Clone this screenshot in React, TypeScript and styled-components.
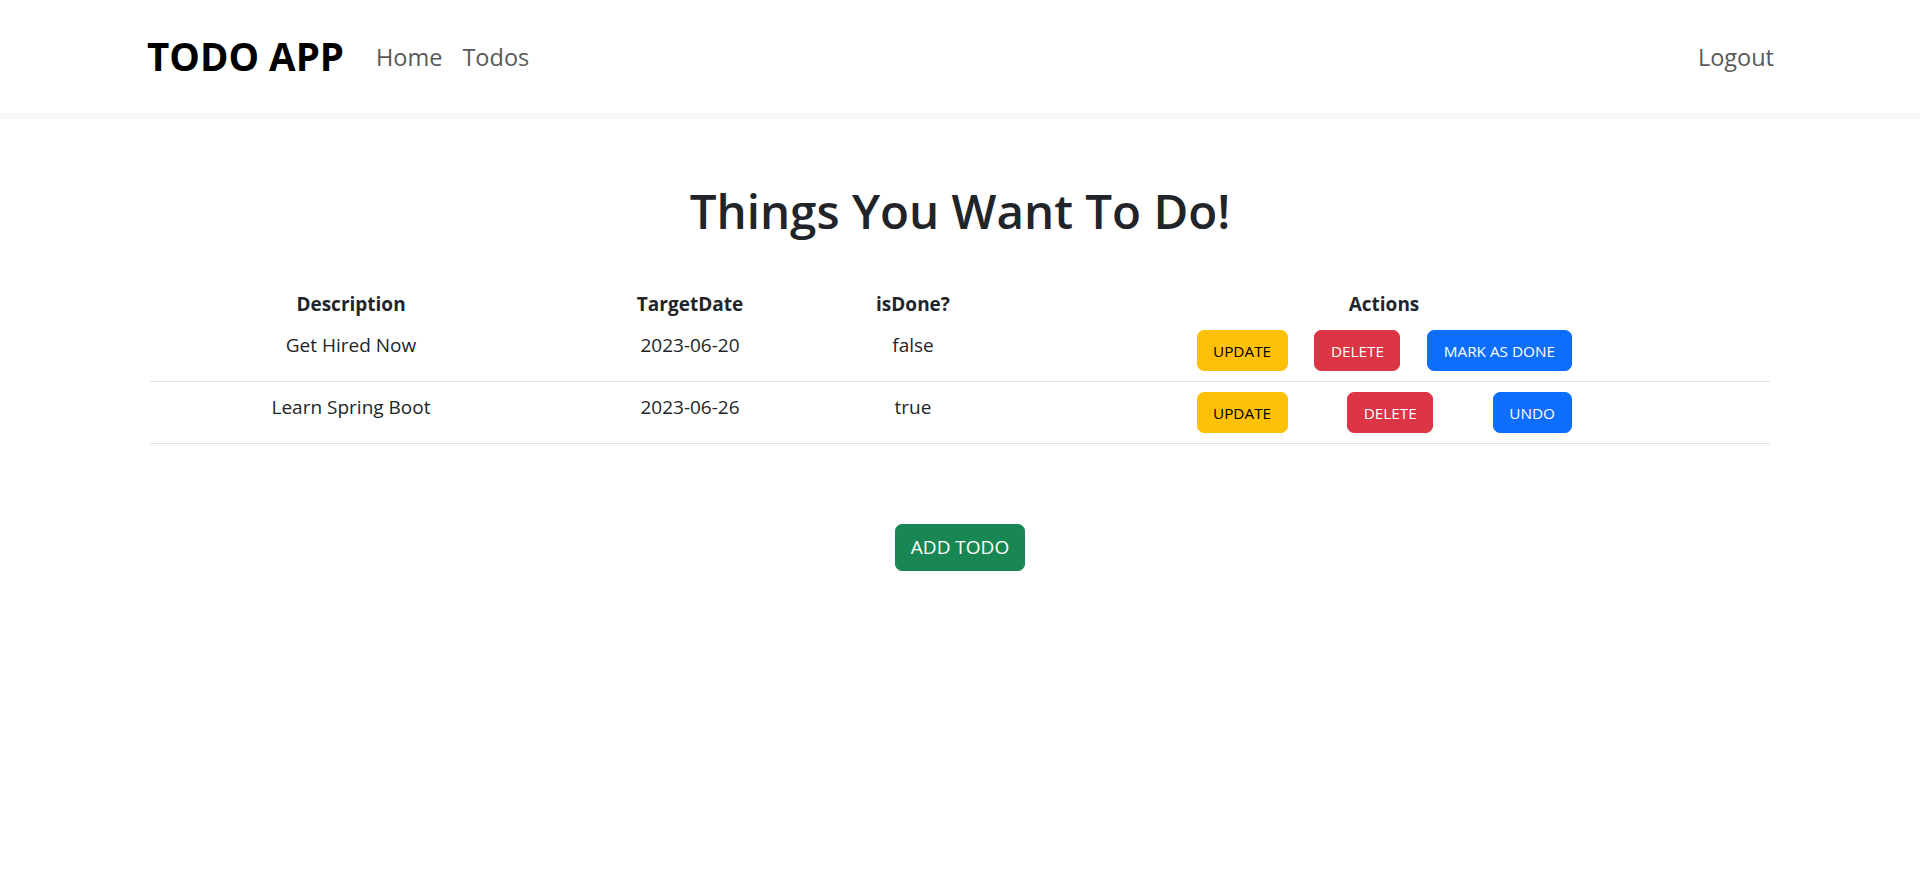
import React from 'react'
import styled, { createGlobalStyle } from 'styled-components'

const GlobalStyle = createGlobalStyle`
  * { box-sizing: border-box; }
  body {
    margin: 0;
    background: #fff;
    font-family: "Open Sans", "Noto Sans", sans-serif;
    color: #212529;
  }
`

type Todo = { id: number; description: string; targetDate: string; done: boolean }

const todos: Todo[] = [
  { id: 1, description: 'Get Hired Now', targetDate: '2023-06-20', done: false },
  { id: 2, description: 'Learn Spring Boot', targetDate: '2023-06-26', done: true },
]

const App = () => {
  return (
    <div>
      <GlobalStyle />
      <Header>
        <NavInner>
          <Left>
            <Brand>TODO APP</Brand>
            <NavLink>Home</NavLink>
            <NavLink>Todos</NavLink>
          </Left>
          <NavLink $end>Logout</NavLink>
        </NavInner>
      </Header>
      <Main>
        <Title>Things You Want To Do!</Title>
        <Table>
          <colgroup>
            <col style={{ width: 402 }} />
            <col style={{ width: 276 }} />
            <col style={{ width: 170 }} />
            <col style={{ width: 772 }} />
          </colgroup>
          <thead>
            <tr>
              <Th>Description</Th>
              <Th>TargetDate</Th>
              <Th>isDone?</Th>
              <Th>Actions</Th>
            </tr>
          </thead>
          <tbody>
            {todos.map(todo => (
              <tr key={todo.id}>
                <Td>{todo.description}</Td>
                <Td>{todo.targetDate}</Td>
                <Td>{todo.done ? 'true' : 'false'}</Td>
                <Td>
                  <Actions>
                    <Button variant="warning">UPDATE</Button>
                    <Button variant="danger">DELETE</Button>
                    <Button variant="primary">{todo.done ? 'UNDO' : 'MARK AS DONE'}</Button>
                  </Actions>
                </Td>
              </tr>
            ))}
          </tbody>
        </Table>
        <AddRow>
          <AddButton>ADD TODO</AddButton>
        </AddRow>
      </Main>
    </div>
  )
}

export default App

const Header = styled.header`
  height: 119px;
  background: #fff;
  border-bottom: 6px solid #f7f8f9;
`
const NavInner = styled.nav`
  width: 1620px;
  height: 113px;
  margin: 0 auto;
  display: flex;
  align-items: center;
  justify-content: space-between;
`
const Left = styled.div`
  display: flex;
  align-items: center;
`
const Brand = styled.div`
  font-size: 38.5px;
  font-weight: 700;
  color: #000;
  line-height: 57px;
  margin-left: -3px;
  margin-right: 22px;
`
const NavLink = styled.a<{ $end?: boolean }>`
  font-size: 23.5px;
  line-height: 34px;
  color: #595959;
  padding: 0 10px;
  margin-right: ${p => (p.$end ? '-14px' : '0')};
  cursor: pointer;
`
const Main = styled.main`
  width: 1620px;
  margin: 0 auto;
  padding-top: 62px;
`
const Title = styled.h1`
  margin: 0 0 39px;
  text-align: center;
  font-size: 47.5px;
  font-weight: 600;
  line-height: 59px;
  color: #212529;
`
const Table = styled.table`
  width: 1620px;
  border-collapse: collapse;
  table-layout: fixed;
  text-align: center;
  vertical-align: top;
  font-size: 19px;
  line-height: 30px;
`
const Th = styled.th`
  font-weight: 700;
  padding: 10px 10px 1px;
  vertical-align: top;
`
const Td = styled.td`
  padding: 10px;
  vertical-align: top;
  border-bottom: 1px solid #dee2e6;
`
const Actions = styled.div`
  width: 375px;
  margin: 0 auto;
  display: flex;
  justify-content: space-between;
`
const colors = {
  warning: { bg: '#ffc107', fg: '#000' },
  danger: { bg: '#dc3545', fg: '#fff' },
  primary: { bg: '#0d6efd', fg: '#fff' },
}
const Button = styled.button<{ variant: keyof typeof colors }>`
  font-family: "Open Sans", "Noto Sans", sans-serif;
  font-size: 15.3px;
  line-height: 24px;
  padding: 7.5px 15.5px;
  border: 1px solid ${p => colors[p.variant].bg};
  border-radius: 7px;
  background: ${p => colors[p.variant].bg};
  color: ${p => colors[p.variant].fg};
  cursor: pointer;
`
const AddRow = styled.div`
  display: flex;
  justify-content: center;
  margin-top: 80px;
`
const AddButton = styled.button`
  font-family: "Open Sans", "Noto Sans", sans-serif;
  font-size: 19px;
  line-height: 29px;
  padding: 8px 15px;
  border: 1px solid #198754;
  border-radius: 7px;
  background: #198754;
  color: #fff;
  cursor: pointer;
`
